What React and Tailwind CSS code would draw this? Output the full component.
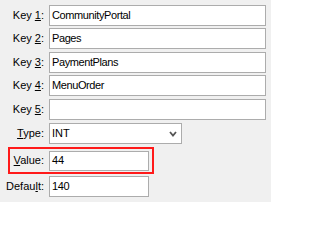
import React from 'react';

const font = { fontFamily: '"Liberation Sans", Arial, sans-serif' };

function Label({ children, width = 'w-[44px]' }) {
  return <div className={`${width} shrink-0 text-right leading-none`}>{children}</div>;
}

function Field({ value, width }) {
  return (
    <div className={`${width} h-full ml-[5px] bg-white border border-[#acacac] flex items-center pl-[2px] leading-none tracking-[-0.4px]`}>
      {value}
    </div>
  );
}

function Row({ label, value, width = 'w-[217px]', className = '' }) {
  return (
    <div className={`flex items-center h-[21px] ${className}`}>
      <Label>{label}</Label>
      <Field value={value} width={width} />
    </div>
  );
}

export default function App() {
  return (
    <div
      className="w-[271px] h-[202px] bg-[#f0f0f0] text-[11px] text-black pt-[5px] flex flex-col overflow-hidden"
      style={font}
    >
      <Row label={<>Key <span className="underline">1</span>:</>} value="CommunityPortal" />
      <Row className="mt-[2px]" label={<>Key <span className="underline">2</span>:</>} value="Pages" />
      <Row className="mt-[3px]" label={<>Key <span className="underline">3</span>:</>} value="PaymentPlans" />
      <Row className="mt-[2px]" label={<>Key <span className="underline">4</span>:</>} value="MenuOrder" />
      <Row className="mt-[3px]" label={<>Key <span className="underline">5</span>:</>} value="" />

      {/* type select */}
      <div className="flex items-center h-[21px] mt-[3px]">
        <Label><span className="underline">T</span>ype:</Label>
        <div className="w-[133px] h-full ml-[5px] bg-white border border-[#acacac] flex items-center justify-between pl-[2px] pr-[4px] leading-none">
          <span>INT</span>
          <svg width="8" height="6" viewBox="0 0 8 6">
            <path d="M1 1 L4 4.5 L7 1" fill="none" stroke="#555" strokeWidth="1.8" />
          </svg>
        </div>
      </div>

      {/* highlighted value row */}
      <div className="ml-[8px] w-[146px] h-[27px] mt-[3px] border-2 border-[#ff1a1a] flex items-center">
        <Label width="w-[34px]"><span className="underline">V</span>alue:</Label>
        <div className="w-[100px] h-[20px] ml-[5px] bg-white border border-[#acacac] flex items-center pl-[2px] leading-none">
          44
        </div>
      </div>

      <Row className="mt-[2px]" width="w-[100px]" label={<>Defau<span className="underline">l</span>t:</>} value="140" />
    </div>
  );
}
